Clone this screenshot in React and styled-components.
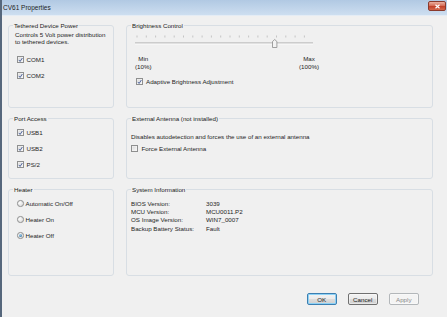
import React from 'react';
import styled, { createGlobalStyle } from 'styled-components';

const Global = createGlobalStyle`
  html, body { margin: 0; padding: 0; background: #f0f0f0; }
  body { font-family: "Liberation Sans", Arial, sans-serif; color: #1a1a1a; }
  * { box-sizing: border-box; }
`;

const Window = styled.div`
  width: 447px;
  height: 317px;
  border-left: 2px solid #56677c;
  display: flex;
  flex-direction: column;
  background: #f0f0f0;
  overflow: hidden;
`;

const TitleBar = styled.div`
  height: 16px;
  flex: none;
  display: flex;
  align-items: center;
  justify-content: space-between;
  padding: 0 1px 0 1px;
  background: linear-gradient(#b1c9e3, #cddef0);
  border-bottom: 1px solid #e4ecf5;
`;

const Title = styled.span`
  font-size: 6.5px;
  line-height: 8px;
  color: #1c1c1c;
  margin-top: 1px;
`;

const CloseButton = styled.div`
  width: 18px;
  height: 10px;
  margin-top: -3px;
  border: 1px solid #8a3a2c;
  border-radius: 2px;
  background: linear-gradient(#eab0a0, #d6705a 45%, #c2422a 55%, #d4674c);
  display: flex;
  align-items: center;
  justify-content: center;
`;

const Client = styled.div`
  flex: 1;
  display: flex;
  flex-direction: column;
  padding: 6px 0 0 6px;
`;

const Grid = styled.div`
  display: grid;
  grid-template-columns: 106px 307px;
  grid-template-rows: 86px 64px 90px;
  column-gap: 12px;
  row-gap: 7px;
`;

const Group = styled.fieldset`
  margin: 0;
  padding: 0;
  min-width: 0;
  border: 1px solid #d8dee4;
  border-radius: 3px;
`;

const Legend = styled.legend`
  padding: 0 1px;
  margin-left: 4px;
  font-size: 6.2px;
  line-height: 7px;
  color: #222;
`;

const Body = styled.div`
  padding: ${p => p.$pad || '0 0 0 6px'};
  font-size: 6.2px;
  color: #1e1e1e;
`;

const Desc = styled.div`
  line-height: ${p => p.$lh || '6.5px'};
  margin-top: ${p => p.$mt || '0'};
`;

const List = styled.div`
  display: flex;
  flex-direction: column;
  margin-top: ${p => p.$mt || '0'};
  margin-left: ${p => p.$ml || '0'};
`;

const Row = styled.div`
  display: flex;
  align-items: center;
  height: ${p => p.$h || '16px'};
  gap: ${p => p.$gap || '2.5px'};
  font-size: 6.2px;
`;

const Box = styled.span`
  width: 7px;
  height: 7px;
  flex: none;
  border: 1px solid #8e8f8f;
  background: linear-gradient(135deg, #d6d6d6, #fafafa);
  box-shadow: inset 0 0 0 0.5px #f6f6f6;
  display: flex;
  align-items: center;
  justify-content: center;
`;

const Radio = styled.span`
  width: 6.5px;
  height: 6.5px;
  flex: none;
  border-radius: 50%;
  border: 1px solid #8e8f8f;
  background: radial-gradient(circle at 35% 35%, #fdfdfd, #d3d3d3);
  display: flex;
  align-items: center;
  justify-content: center;
`;

const Dot = styled.span`
  width: 3px;
  height: 3px;
  border-radius: 50%;
  background: radial-gradient(circle at 40% 35%, #9fd1f0, #1f5e8e);
`;

const SliderWrap = styled.div`
  margin: 4px 0 0 3px;
  height: 15px;
`;

const Scale = styled.div`
  display: flex;
  justify-content: space-between;
  width: 184px;
  margin: 6.5px 0 0 4px;
  line-height: 8.5px;
  font-size: 6.2px;
`;

const ScaleLabel = styled.div`
  text-align: center;
`;

const InfoGrid = styled.div`
  display: grid;
  grid-template-columns: 75px auto;
  line-height: 8.3px;
  margin-top: 6.8px;
  font-size: 6.2px;
`;

const Buttons = styled.div`
  display: flex;
  justify-content: flex-end;
  gap: 10.5px;
  margin-top: 17px;
  padding-right: 28px;
`;

const Button = styled.button`
  width: 30.5px;
  height: 12px;
  padding: 0;
  font-family: "Liberation Sans", Arial, sans-serif;
  font-size: 6.2px;
  border-radius: 2px;
  border: 1px solid ${p => (p.$default ? '#3c7fb1' : p.disabled ? '#b3b7ba' : '#707070')};
  color: ${p => (p.disabled ? '#8a8a8a' : '#1a1a1a')};
  background: ${p =>
    p.disabled
      ? '#f4f4f4'
      : 'linear-gradient(#f3f3f3, #ebebeb 48%, #dddddd 52%, #cfcfcf)'};
  box-shadow: ${p => (p.$default ? 'inset 0 0 0 1px #8ed2f6' : 'inset 0 0 0 0.5px #fcfcfc')};
`;

const Check = () => (
  <svg width="6" height="6" viewBox="0 0 12 12">
    <path d="M2.5 6.5 L5 9.5 L10 2" stroke="#3e5794" strokeWidth="2.2" fill="none" strokeLinecap="round" />
  </svg>
);

const CheckItem = ({ checked, children, gap }) => (
  <Row $gap={gap}>
    <Box>{checked && <Check />}</Box>
    <span>{children}</span>
  </Row>
);

const RadioItem = ({ checked, children }) => (
  <Row $gap="2px">
    <Radio>{checked && <Dot />}</Radio>
    <span>{children}</span>
  </Row>
);

const ticks = Array.from({ length: 19 }, (_, i) => 3 + i * 9.3);

const Slider = () => (
  <svg width="182" height="15" viewBox="0 0 182 15">
    {ticks.map((x, i) => (
      <line key={i} x1={x} x2={x} y1="2.5" y2="4.5" stroke="#a8a8a8" strokeWidth="0.6" />
    ))}
    <line x1="1" x2="179" y1="10" y2="10" stroke="#a8a8a8" strokeWidth="1" />
    <line x1="1" x2="179" y1="11" y2="11" stroke="#ffffff" strokeWidth="0.8" />
    <path d="M138.5 8.5 L140.7 6.5 L142.9 8.5 V14.5 H138.5 Z" fill="#f3f3f3" stroke="#8a8a8a" strokeWidth="0.8" />
  </svg>
);

export default function App() {
  return (
    <>
      <Global />
      <Window>
        <TitleBar>
          <Title>CV61 Properties</Title>
          <CloseButton>
            <svg width="7" height="5" viewBox="0 0 7 5">
              <path d="M1.5 0.8 L5.5 4.2 M5.5 0.8 L1.5 4.2" stroke="#ffffff" strokeWidth="1.2" />
            </svg>
          </CloseButton>
        </TitleBar>
        <Client>
          <Grid>
            <Group>
              <Legend>Tethered Device Power</Legend>
              <Body $pad="3px 0 0 6px">
                <Desc>
                  Controls 5 Volt power distribution
                  <br />
                  to tethered devices.
                </Desc>
                <List $mt="6.5px" $ml="2px">
                  <CheckItem checked>COM1</CheckItem>
                  <CheckItem checked>COM2</CheckItem>
                </List>
              </Body>
            </Group>

            <Group>
              <Legend>Brightness Control</Legend>
              <Body $pad="0 0 0 4px">
                <SliderWrap>
                  <Slider />
                </SliderWrap>
                <Scale>
                  <ScaleLabel>
                    Min
                    <br />
                    (10%)
                  </ScaleLabel>
                  <ScaleLabel>
                    Max
                    <br />
                    (100%)
                  </ScaleLabel>
                </Scale>
                <List $mt="2px" $ml="5px">
                  <CheckItem checked gap="3px">Adaptive Brightness Adjustment</CheckItem>
                </List>
              </Body>
            </Group>

            <Group>
              <Legend>Port Access</Legend>
              <Body $pad="2.5px 0 0 8px">
                <List>
                  <CheckItem checked>USB1</CheckItem>
                  <CheckItem checked>USB2</CheckItem>
                  <CheckItem checked>PS/2</CheckItem>
                </List>
              </Body>
            </Group>

            <Group>
              <Legend>External Antenna (not installed)</Legend>
              <Body $pad="10.5px 0 0 4px">
                <Desc $lh="7px">Disables autodetection and forces the use of an external antenna</Desc>
                <List $mt="1px">
                  <CheckItem gap="3.5px">Force External Antenna</CheckItem>
                </List>
              </Body>
            </Group>

            <Group>
              <Legend>Heater</Legend>
              <Body $pad="2.5px 0 0 8px">
                <List>
                  <RadioItem>Automatic On/Off</RadioItem>
                  <RadioItem>Heater On</RadioItem>
                  <RadioItem checked>Heater Off</RadioItem>
                </List>
              </Body>
            </Group>

            <Group>
              <Legend>System Information</Legend>
              <Body $pad="0 0 0 4px">
                <InfoGrid>
                  <span>BIOS Version:</span>
                  <span>3039</span>
                  <span>MCU Version:</span>
                  <span>MCU0011.P2</span>
                  <span>OS Image Version:</span>
                  <span>WIN7_0007</span>
                  <span>Backup Battery Status:</span>
                  <span>Fault</span>
                </InfoGrid>
              </Body>
            </Group>
          </Grid>
          <Buttons>
            <Button $default>OK</Button>
            <Button>Cancel</Button>
            <Button disabled>Apply</Button>
          </Buttons>
        </Client>
      </Window>
    </>
  );
}
